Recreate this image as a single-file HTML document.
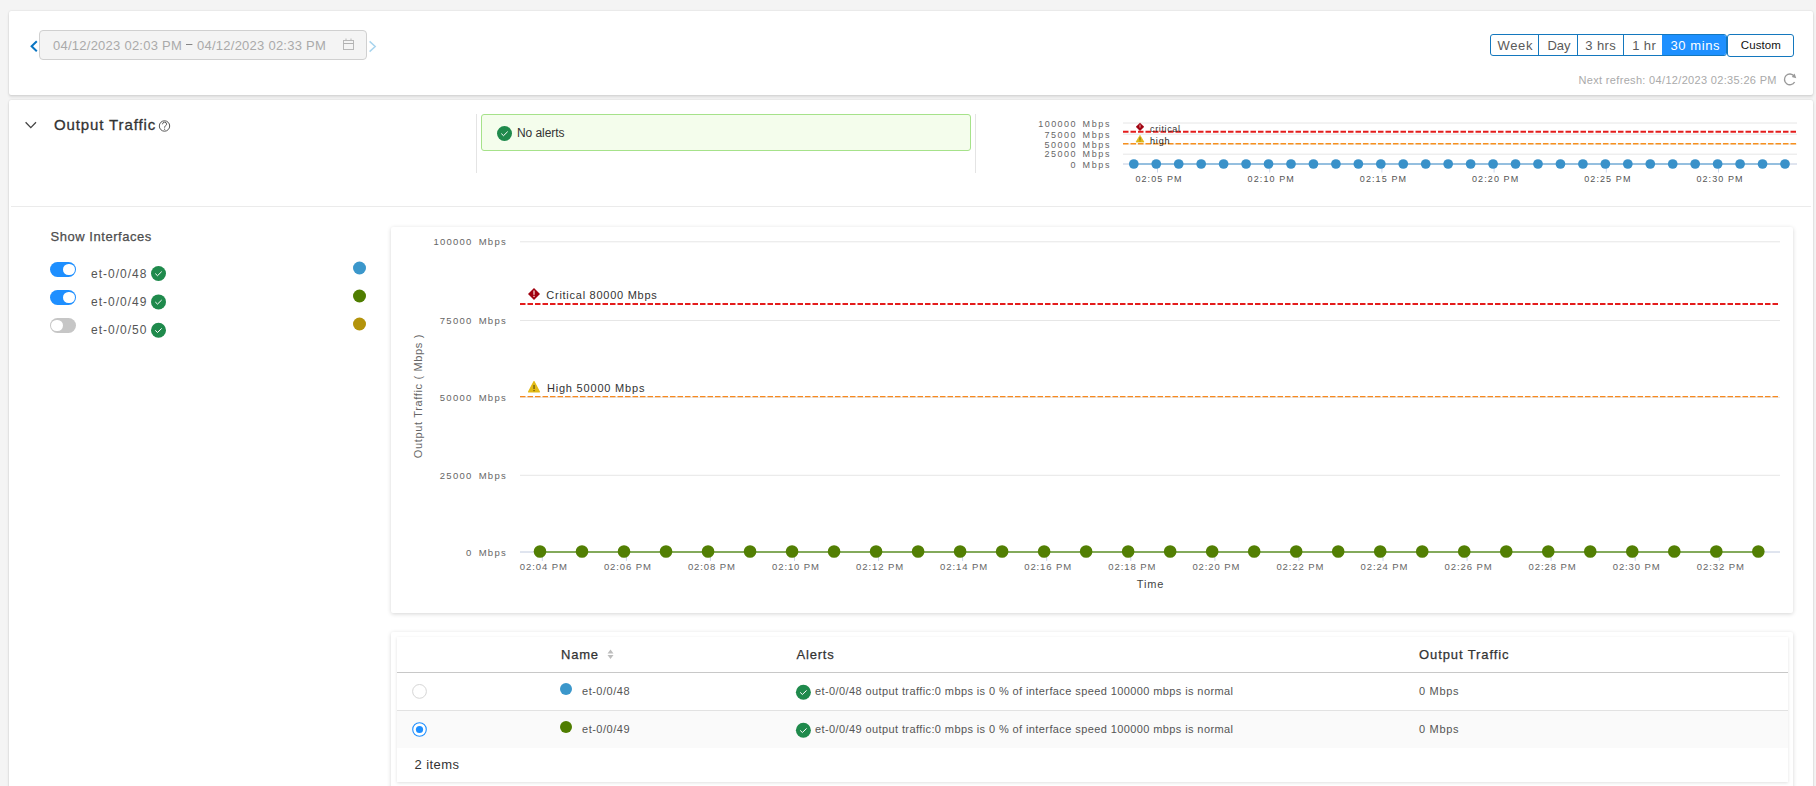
<!DOCTYPE html>
<html><head><meta charset="utf-8"><style>
html,body{margin:0;padding:0;width:1816px;height:786px;overflow:hidden;background:#f4f4f4;font-family:"Liberation Sans", sans-serif}
.card{position:absolute;background:#fff;border-radius:2px;box-shadow:0 0 2px rgba(0,0,0,0.14), 0 2px 3px rgba(0,0,0,0.1)}
.card2{position:absolute;background:#fff;border-radius:2px;box-shadow:0 1px 4px rgba(0,0,0,0.17)}
svg{position:absolute;left:0;top:0}
text{font-family:"Liberation Sans", sans-serif}
</style></head><body>
<div class="card" style="left:9px;top:11px;width:1804px;height:84px"></div>
<div class="card" style="left:9px;top:100px;width:1804px;height:720px"></div>
<div style="position:absolute;left:39px;top:30px;width:326px;height:28px;background:#f4f4f4;border:1px solid #d0d0d0;border-radius:4px"></div>
<div style="position:absolute;left:1490px;top:34px;width:235px;height:20px;border:1px solid #1478be;border-radius:3px;overflow:hidden"><div style="position:absolute;left:171px;top:-1px;width:65px;height:22px;background:#1e90ff;border-radius:0 3px 3px 0"></div><div style="position:absolute;left:47px;top:0;width:1px;height:20px;background:#1478be"></div><div style="position:absolute;left:86px;top:0;width:1px;height:20px;background:#1478be"></div><div style="position:absolute;left:132px;top:0;width:1px;height:20px;background:#1478be"></div></div>
<div style="position:absolute;left:1727px;top:34px;width:65px;height:21px;border:1px solid #1478be;border-radius:3px"></div>
<div style="position:absolute;left:476px;top:114px;width:1px;height:59px;background:#e4e4e4"></div>
<div style="position:absolute;left:975px;top:114px;width:1px;height:59px;background:#e4e4e4"></div>
<div style="position:absolute;left:481px;top:114px;width:488px;height:35px;background:#f4fdec;border:1px solid #a6e28a;border-radius:3px"></div>
<div style="position:absolute;left:11px;top:206px;width:1800px;height:1px;background:#ebebeb"></div>
<div style="position:absolute;left:50px;top:262.0px;width:26px;height:15px;border-radius:8px;background:#1e8fff"></div>
<div style="position:absolute;left:63.2px;top:263.7px;width:11.6px;height:11.6px;border-radius:6px;background:#fff"></div>
<div style="position:absolute;left:50px;top:290.1px;width:26px;height:15px;border-radius:8px;background:#1e8fff"></div>
<div style="position:absolute;left:63.2px;top:291.8px;width:11.6px;height:11.6px;border-radius:6px;background:#fff"></div>
<div style="position:absolute;left:50px;top:318.2px;width:26px;height:15px;border-radius:8px;background:#c6c6c6"></div>
<div style="position:absolute;left:51.2px;top:319.9px;width:11.6px;height:11.6px;border-radius:6px;background:#fff"></div>
<div class="card2" style="left:391px;top:227px;width:1402px;height:386px"></div>
<div class="card2" style="left:391px;top:632px;width:1402px;height:170px"></div>
<div style="position:absolute;left:397px;top:637px;width:1391px;height:145px;background:#fff;box-shadow:0 1px 3px rgba(0,0,0,0.12)"></div>
<div style="position:absolute;left:397px;top:672px;width:1391px;height:1px;background:#c8c8c8"></div>
<div style="position:absolute;left:397px;top:710px;width:1391px;height:1px;background:#e2e2e2"></div>
<div style="position:absolute;left:397px;top:711px;width:1391px;height:37px;background:#fafafa"></div>
<svg width="1816" height="786" viewBox="0 0 1816 786">
<path d="M36.8 41.2 L31.6 46.2 L36.8 51.2" fill="none" stroke="#0a75c2" stroke-width="2"/>
<path d="M369.6 41.4 L375.2 46.5 L369.6 51.6" fill="none" stroke="#a9d5ee" stroke-width="1.5"/>
<text x="53" y="50" font-size="13" fill="#aaaaaa" text-anchor="start" textLength="128.8" lengthAdjust="spacing"  >04/12/2023 02:03 PM</text>
<rect x="186" y="44" width="6.4" height="1" fill="#858585"/>
<text x="197" y="50" font-size="13" fill="#aaaaaa" text-anchor="start" textLength="128.8" lengthAdjust="spacing"  >04/12/2023 02:33 PM</text>
<rect x="343.5" y="40.5" width="10" height="9" fill="none" stroke="#b8b8b8" stroke-width="1"/>
<line x1="343.5" y1="43.5" x2="353.5" y2="43.5" stroke="#b0b0b0" stroke-width="1"/>
<line x1="346" y1="38.5" x2="346" y2="41" stroke="#b8b8b8" stroke-width="1"/>
<line x1="351" y1="38.5" x2="351" y2="41" stroke="#b8b8b8" stroke-width="1"/>
<text x="1515" y="50" font-size="13" fill="#5a5a5a" text-anchor="middle" textLength="35" lengthAdjust="spacing"  >Week</text>
<text x="1559" y="50" font-size="13" fill="#5a5a5a" text-anchor="middle" textLength="23" lengthAdjust="spacing"  >Day</text>
<text x="1600.6" y="50" font-size="13" fill="#5a5a5a" text-anchor="middle" textLength="30.5" lengthAdjust="spacing"  >3 hrs</text>
<text x="1644" y="50" font-size="13" fill="#5a5a5a" text-anchor="middle" textLength="23.5" lengthAdjust="spacing"  >1 hr</text>
<text x="1695" y="50" font-size="13" fill="#ffffff" text-anchor="middle" textLength="49" lengthAdjust="spacing"  >30 mins</text>
<text x="1760.8" y="49" font-size="11.5" fill="#111" text-anchor="middle" textLength="40" lengthAdjust="spacing"  >Custom</text>
<text x="1578.5" y="84" font-size="11" fill="#aaaaaa" text-anchor="start" textLength="198" lengthAdjust="spacing"  >Next refresh: 04/12/2023 02:35:26 PM</text>
<path d="M1794.6 82 A5.4 5.4 0 1 1 1794.1 76" fill="none" stroke="#9a9a9a" stroke-width="1.4"/>
<path d="M1794.6 73.6 L1796.3 78.2 L1791.8 77 Z" fill="#9a9a9a"/>
<path d="M25.6 122.2 L30.8 127.6 L36 122.2" fill="none" stroke="#444" stroke-width="1.3"/>
<text x="54" y="130" font-size="15" fill="#333" text-anchor="start" textLength="101.2" lengthAdjust="spacing" stroke="#333" stroke-width="0.3" >Output Traffic</text>
<circle cx="164.5" cy="126" r="5.2" fill="none" stroke="#555" stroke-width="1"/>
<path d="M162.4 124.3 Q162.6 122.2 164.6 122.2 Q166.7 122.3 166.6 124.2 Q166.5 125.4 165.2 126 Q164.6 126.4 164.6 127.7" fill="none" stroke="#555" stroke-width="0.95"/>
<circle cx="164.6" cy="129.2" r="0.6" fill="#555"/>
<circle cx="504.5" cy="133.5" r="7.5" fill="#1f8a4c"/>
<path d="M501.30 133.60 L503.50 135.70 L507.70 131.60" fill="none" stroke="#fff" stroke-width="1.0"/>
<text x="517" y="137" font-size="12" fill="#333" text-anchor="start" textLength="47.5" lengthAdjust="spacing"  >No alerts</text>
<line x1="1123" y1="164" x2="1797" y2="164" stroke="#e6e6e6" stroke-width="1"/>
<line x1="1123" y1="154.2" x2="1797" y2="154.2" stroke="#e6e6e6" stroke-width="1"/>
<line x1="1123" y1="144" x2="1797" y2="144" stroke="#e6e6e6" stroke-width="1"/>
<line x1="1123" y1="134.2" x2="1797" y2="134.2" stroke="#e6e6e6" stroke-width="1"/>
<line x1="1123" y1="123" x2="1797" y2="123" stroke="#e6e6e6" stroke-width="1"/>
<text x="1075.5" y="167.5" font-size="9" fill="#666" text-anchor="end"   >0</text>
<text x="1082.6" y="167.5" font-size="9" fill="#666" text-anchor="start" textLength="26.8" lengthAdjust="spacing"  >Mbps</text>
<text x="1075.5" y="156.6" font-size="9" fill="#666" text-anchor="end" textLength="31.0" lengthAdjust="spacing"  >25000</text>
<text x="1082.6" y="156.6" font-size="9" fill="#666" text-anchor="start" textLength="26.8" lengthAdjust="spacing"  >Mbps</text>
<text x="1075.5" y="147.7" font-size="9" fill="#666" text-anchor="end" textLength="31.0" lengthAdjust="spacing"  >50000</text>
<text x="1082.6" y="147.7" font-size="9" fill="#666" text-anchor="start" textLength="26.8" lengthAdjust="spacing"  >Mbps</text>
<text x="1075.5" y="137.8" font-size="9" fill="#666" text-anchor="end" textLength="31.0" lengthAdjust="spacing"  >75000</text>
<text x="1082.6" y="137.8" font-size="9" fill="#666" text-anchor="start" textLength="26.8" lengthAdjust="spacing"  >Mbps</text>
<text x="1075.5" y="127" font-size="9" fill="#666" text-anchor="end" textLength="37.2" lengthAdjust="spacing"  >100000</text>
<text x="1082.6" y="127" font-size="9" fill="#666" text-anchor="start" textLength="26.8" lengthAdjust="spacing"  >Mbps</text>
<line x1="1123" y1="131.8" x2="1797" y2="131.8" stroke="#e41c1c" stroke-width="2" stroke-dasharray="5.5 2"/>
<line x1="1123" y1="143.7" x2="1797" y2="143.7" stroke="#f7901e" stroke-width="1.5" stroke-dasharray="5.5 2"/>
<line x1="1123" y1="164" x2="1797" y2="164" stroke="#ccd6eb" stroke-width="1"/>
<line x1="1157.5" y1="164" x2="1157.5" y2="172.5" stroke="#ccd6eb" stroke-width="1"/>
<text x="1158.5" y="182" font-size="9" fill="#555" text-anchor="middle" textLength="46.2" lengthAdjust="spacing"  >02:05 PM</text>
<line x1="1269.7" y1="164" x2="1269.7" y2="172.5" stroke="#ccd6eb" stroke-width="1"/>
<text x="1270.7" y="182" font-size="9" fill="#555" text-anchor="middle" textLength="46.2" lengthAdjust="spacing"  >02:10 PM</text>
<line x1="1381.9" y1="164" x2="1381.9" y2="172.5" stroke="#ccd6eb" stroke-width="1"/>
<text x="1382.9" y="182" font-size="9" fill="#555" text-anchor="middle" textLength="46.2" lengthAdjust="spacing"  >02:15 PM</text>
<line x1="1494.1" y1="164" x2="1494.1" y2="172.5" stroke="#ccd6eb" stroke-width="1"/>
<text x="1495.1" y="182" font-size="9" fill="#555" text-anchor="middle" textLength="46.2" lengthAdjust="spacing"  >02:20 PM</text>
<line x1="1606.3" y1="164" x2="1606.3" y2="172.5" stroke="#ccd6eb" stroke-width="1"/>
<text x="1607.3" y="182" font-size="9" fill="#555" text-anchor="middle" textLength="46.2" lengthAdjust="spacing"  >02:25 PM</text>
<line x1="1718.5" y1="164" x2="1718.5" y2="172.5" stroke="#ccd6eb" stroke-width="1"/>
<text x="1719.5" y="182" font-size="9" fill="#555" text-anchor="middle" textLength="46.2" lengthAdjust="spacing"  >02:30 PM</text>
<line x1="1134" y1="164" x2="1785" y2="164" stroke="#4a9ad0" stroke-width="1.2"/>
<circle cx="1133.80" cy="164" r="4.85" fill="#3991c9"/>
<circle cx="1156.26" cy="164" r="4.85" fill="#3991c9"/>
<circle cx="1178.71" cy="164" r="4.85" fill="#3991c9"/>
<circle cx="1201.17" cy="164" r="4.85" fill="#3991c9"/>
<circle cx="1223.62" cy="164" r="4.85" fill="#3991c9"/>
<circle cx="1246.08" cy="164" r="4.85" fill="#3991c9"/>
<circle cx="1268.53" cy="164" r="4.85" fill="#3991c9"/>
<circle cx="1290.99" cy="164" r="4.85" fill="#3991c9"/>
<circle cx="1313.44" cy="164" r="4.85" fill="#3991c9"/>
<circle cx="1335.90" cy="164" r="4.85" fill="#3991c9"/>
<circle cx="1358.35" cy="164" r="4.85" fill="#3991c9"/>
<circle cx="1380.81" cy="164" r="4.85" fill="#3991c9"/>
<circle cx="1403.26" cy="164" r="4.85" fill="#3991c9"/>
<circle cx="1425.72" cy="164" r="4.85" fill="#3991c9"/>
<circle cx="1448.17" cy="164" r="4.85" fill="#3991c9"/>
<circle cx="1470.63" cy="164" r="4.85" fill="#3991c9"/>
<circle cx="1493.08" cy="164" r="4.85" fill="#3991c9"/>
<circle cx="1515.54" cy="164" r="4.85" fill="#3991c9"/>
<circle cx="1537.99" cy="164" r="4.85" fill="#3991c9"/>
<circle cx="1560.45" cy="164" r="4.85" fill="#3991c9"/>
<circle cx="1582.90" cy="164" r="4.85" fill="#3991c9"/>
<circle cx="1605.36" cy="164" r="4.85" fill="#3991c9"/>
<circle cx="1627.81" cy="164" r="4.85" fill="#3991c9"/>
<circle cx="1650.27" cy="164" r="4.85" fill="#3991c9"/>
<circle cx="1672.72" cy="164" r="4.85" fill="#3991c9"/>
<circle cx="1695.18" cy="164" r="4.85" fill="#3991c9"/>
<circle cx="1717.63" cy="164" r="4.85" fill="#3991c9"/>
<circle cx="1740.09" cy="164" r="4.85" fill="#3991c9"/>
<circle cx="1762.54" cy="164" r="4.85" fill="#3991c9"/>
<circle cx="1785.00" cy="164" r="4.85" fill="#3991c9"/>
<path d="M1140 122.9 L1144 126.8 L1140 130.7 L1136 126.8 Z" fill="#a0000f" stroke="#a0000f" stroke-width="0.4" stroke-linejoin="round"/><rect x="1139.5" y="124.6" width="1" height="3" fill="#e8b0b0"/>
<text x="1150" y="131.5" font-size="9" fill="#333" text-anchor="start" textLength="30" lengthAdjust="spacing"  >critical</text>
<path d="M1140 135.4 L1143.9 142 L1136.1 142 Z" fill="#e0b816" stroke="#e0b816" stroke-width="0.8" stroke-linejoin="round"/><rect x="1139.5" y="137.3" width="1" height="2.6" fill="#7a6a10"/><rect x="1139.5" y="140.6" width="1" height="0.8" fill="#7a6a10"/>
<text x="1150" y="143.8" font-size="9" fill="#222" text-anchor="start" textLength="19.5" lengthAdjust="spacing"  >high</text>
<text x="50.5" y="240.7" font-size="13" fill="#4d4d4d" text-anchor="start" textLength="100.8" lengthAdjust="spacing" stroke="#4d4d4d" stroke-width="0.25" >Show Interfaces</text>
<text x="91" y="277.7" font-size="12" fill="#555" text-anchor="start" textLength="55.5" lengthAdjust="spacing"  >et-0/0/48</text>
<circle cx="158.5" cy="273.5" r="7.5" fill="#1f8a4c"/>
<path d="M155.30 273.60 L157.50 275.70 L161.70 271.60" fill="none" stroke="#fff" stroke-width="1.0"/>
<circle cx="359.5" cy="268" r="6.5" fill="#3b97cb"/>
<text x="91" y="305.9" font-size="12" fill="#555" text-anchor="start" textLength="55.5" lengthAdjust="spacing"  >et-0/0/49</text>
<circle cx="158.5" cy="301.9" r="7.5" fill="#1f8a4c"/>
<path d="M155.30 302.00 L157.50 304.10 L161.70 300.00" fill="none" stroke="#fff" stroke-width="1.0"/>
<circle cx="359.5" cy="296" r="6.5" fill="#4f7d00"/>
<text x="91" y="334.1" font-size="12" fill="#555" text-anchor="start" textLength="55.5" lengthAdjust="spacing"  >et-0/0/50</text>
<circle cx="158.5" cy="330.3" r="7.5" fill="#1f8a4c"/>
<path d="M155.30 330.40 L157.50 332.50 L161.70 328.40" fill="none" stroke="#fff" stroke-width="1.0"/>
<circle cx="359.5" cy="324" r="6.5" fill="#b3930b"/>
<line x1="520" y1="552.0" x2="1780" y2="552.0" stroke="#e6e6e6" stroke-width="1"/>
<text x="471.3" y="555.6" font-size="9.5" fill="#666" text-anchor="end"   >0</text>
<text x="478.7" y="555.6" font-size="9.5" fill="#666" text-anchor="start" textLength="27" lengthAdjust="spacing"  >Mbps</text>
<line x1="520" y1="475.3" x2="1780" y2="475.3" stroke="#e6e6e6" stroke-width="1"/>
<text x="471.3" y="478.9" font-size="9.5" fill="#666" text-anchor="end" textLength="31.5" lengthAdjust="spacing"  >25000</text>
<text x="478.7" y="478.9" font-size="9.5" fill="#666" text-anchor="start" textLength="27" lengthAdjust="spacing"  >Mbps</text>
<line x1="520" y1="397.3" x2="1780" y2="397.3" stroke="#e6e6e6" stroke-width="1"/>
<text x="471.3" y="400.9" font-size="9.5" fill="#666" text-anchor="end" textLength="31.5" lengthAdjust="spacing"  >50000</text>
<text x="478.7" y="400.9" font-size="9.5" fill="#666" text-anchor="start" textLength="27" lengthAdjust="spacing"  >Mbps</text>
<line x1="520" y1="320.5" x2="1780" y2="320.5" stroke="#e6e6e6" stroke-width="1"/>
<text x="471.3" y="324.1" font-size="9.5" fill="#666" text-anchor="end" textLength="31.5" lengthAdjust="spacing"  >75000</text>
<text x="478.7" y="324.1" font-size="9.5" fill="#666" text-anchor="start" textLength="27" lengthAdjust="spacing"  >Mbps</text>
<line x1="520" y1="241.8" x2="1780" y2="241.8" stroke="#e6e6e6" stroke-width="1"/>
<text x="471.3" y="245.4" font-size="9.5" fill="#666" text-anchor="end" textLength="37.8" lengthAdjust="spacing"  >100000</text>
<text x="478.7" y="245.4" font-size="9.5" fill="#666" text-anchor="start" textLength="27" lengthAdjust="spacing"  >Mbps</text>
<line x1="520" y1="304" x2="1780" y2="304" stroke="#e41c1c" stroke-width="2" stroke-dasharray="5.5 2"/>
<line x1="520" y1="396.6" x2="1780" y2="396.6" stroke="#f7891f" stroke-width="1.3" stroke-dasharray="5.5 2"/>
<line x1="520" y1="552" x2="1780" y2="552" stroke="#ccd6eb" stroke-width="1"/>
<line x1="542.3" y1="552" x2="542.3" y2="561" stroke="#ccd6eb" stroke-width="1"/>
<text x="543.3" y="569.6" font-size="9.5" fill="#666" text-anchor="middle" textLength="47" lengthAdjust="spacing"  >02:04 PM</text>
<line x1="626.4" y1="552" x2="626.4" y2="561" stroke="#ccd6eb" stroke-width="1"/>
<text x="627.4" y="569.6" font-size="9.5" fill="#666" text-anchor="middle" textLength="47" lengthAdjust="spacing"  >02:06 PM</text>
<line x1="710.4" y1="552" x2="710.4" y2="561" stroke="#ccd6eb" stroke-width="1"/>
<text x="711.4" y="569.6" font-size="9.5" fill="#666" text-anchor="middle" textLength="47" lengthAdjust="spacing"  >02:08 PM</text>
<line x1="794.5" y1="552" x2="794.5" y2="561" stroke="#ccd6eb" stroke-width="1"/>
<text x="795.5" y="569.6" font-size="9.5" fill="#666" text-anchor="middle" textLength="47" lengthAdjust="spacing"  >02:10 PM</text>
<line x1="878.6" y1="552" x2="878.6" y2="561" stroke="#ccd6eb" stroke-width="1"/>
<text x="879.6" y="569.6" font-size="9.5" fill="#666" text-anchor="middle" textLength="47" lengthAdjust="spacing"  >02:12 PM</text>
<line x1="962.6" y1="552" x2="962.6" y2="561" stroke="#ccd6eb" stroke-width="1"/>
<text x="963.6" y="569.6" font-size="9.5" fill="#666" text-anchor="middle" textLength="47" lengthAdjust="spacing"  >02:14 PM</text>
<line x1="1046.7" y1="552" x2="1046.7" y2="561" stroke="#ccd6eb" stroke-width="1"/>
<text x="1047.7" y="569.6" font-size="9.5" fill="#666" text-anchor="middle" textLength="47" lengthAdjust="spacing"  >02:16 PM</text>
<line x1="1130.8" y1="552" x2="1130.8" y2="561" stroke="#ccd6eb" stroke-width="1"/>
<text x="1131.8" y="569.6" font-size="9.5" fill="#666" text-anchor="middle" textLength="47" lengthAdjust="spacing"  >02:18 PM</text>
<line x1="1214.9" y1="552" x2="1214.9" y2="561" stroke="#ccd6eb" stroke-width="1"/>
<text x="1215.9" y="569.6" font-size="9.5" fill="#666" text-anchor="middle" textLength="47" lengthAdjust="spacing"  >02:20 PM</text>
<line x1="1298.9" y1="552" x2="1298.9" y2="561" stroke="#ccd6eb" stroke-width="1"/>
<text x="1299.9" y="569.6" font-size="9.5" fill="#666" text-anchor="middle" textLength="47" lengthAdjust="spacing"  >02:22 PM</text>
<line x1="1383.0" y1="552" x2="1383.0" y2="561" stroke="#ccd6eb" stroke-width="1"/>
<text x="1384.0" y="569.6" font-size="9.5" fill="#666" text-anchor="middle" textLength="47" lengthAdjust="spacing"  >02:24 PM</text>
<line x1="1467.1" y1="552" x2="1467.1" y2="561" stroke="#ccd6eb" stroke-width="1"/>
<text x="1468.1" y="569.6" font-size="9.5" fill="#666" text-anchor="middle" textLength="47" lengthAdjust="spacing"  >02:26 PM</text>
<line x1="1551.1" y1="552" x2="1551.1" y2="561" stroke="#ccd6eb" stroke-width="1"/>
<text x="1552.1" y="569.6" font-size="9.5" fill="#666" text-anchor="middle" textLength="47" lengthAdjust="spacing"  >02:28 PM</text>
<line x1="1635.2" y1="552" x2="1635.2" y2="561" stroke="#ccd6eb" stroke-width="1"/>
<text x="1636.2" y="569.6" font-size="9.5" fill="#666" text-anchor="middle" textLength="47" lengthAdjust="spacing"  >02:30 PM</text>
<line x1="1719.3" y1="552" x2="1719.3" y2="561" stroke="#ccd6eb" stroke-width="1"/>
<text x="1720.3" y="569.6" font-size="9.5" fill="#666" text-anchor="middle" textLength="47" lengthAdjust="spacing"  >02:32 PM</text>
<line x1="540" y1="552" x2="1758.3" y2="552" stroke="#64962a" stroke-width="1.6"/>
<circle cx="540.00" cy="551.5" r="6.3" fill="#527f03"/>
<circle cx="582.01" cy="551.5" r="6.3" fill="#527f03"/>
<circle cx="624.02" cy="551.5" r="6.3" fill="#527f03"/>
<circle cx="666.03" cy="551.5" r="6.3" fill="#527f03"/>
<circle cx="708.04" cy="551.5" r="6.3" fill="#527f03"/>
<circle cx="750.05" cy="551.5" r="6.3" fill="#527f03"/>
<circle cx="792.06" cy="551.5" r="6.3" fill="#527f03"/>
<circle cx="834.07" cy="551.5" r="6.3" fill="#527f03"/>
<circle cx="876.08" cy="551.5" r="6.3" fill="#527f03"/>
<circle cx="918.09" cy="551.5" r="6.3" fill="#527f03"/>
<circle cx="960.10" cy="551.5" r="6.3" fill="#527f03"/>
<circle cx="1002.11" cy="551.5" r="6.3" fill="#527f03"/>
<circle cx="1044.12" cy="551.5" r="6.3" fill="#527f03"/>
<circle cx="1086.13" cy="551.5" r="6.3" fill="#527f03"/>
<circle cx="1128.14" cy="551.5" r="6.3" fill="#527f03"/>
<circle cx="1170.16" cy="551.5" r="6.3" fill="#527f03"/>
<circle cx="1212.17" cy="551.5" r="6.3" fill="#527f03"/>
<circle cx="1254.18" cy="551.5" r="6.3" fill="#527f03"/>
<circle cx="1296.19" cy="551.5" r="6.3" fill="#527f03"/>
<circle cx="1338.20" cy="551.5" r="6.3" fill="#527f03"/>
<circle cx="1380.21" cy="551.5" r="6.3" fill="#527f03"/>
<circle cx="1422.22" cy="551.5" r="6.3" fill="#527f03"/>
<circle cx="1464.23" cy="551.5" r="6.3" fill="#527f03"/>
<circle cx="1506.24" cy="551.5" r="6.3" fill="#527f03"/>
<circle cx="1548.25" cy="551.5" r="6.3" fill="#527f03"/>
<circle cx="1590.26" cy="551.5" r="6.3" fill="#527f03"/>
<circle cx="1632.27" cy="551.5" r="6.3" fill="#527f03"/>
<circle cx="1674.28" cy="551.5" r="6.3" fill="#527f03"/>
<circle cx="1716.29" cy="551.5" r="6.3" fill="#527f03"/>
<circle cx="1758.30" cy="551.5" r="6.3" fill="#527f03"/>
<text x="1150" y="587.6" font-size="11" fill="#444" text-anchor="middle" textLength="26.5" lengthAdjust="spacing"  >Time</text>
<text x="0" y="0" font-size="11" fill="#666" text-anchor="middle" textLength="123.5" lengthAdjust="spacing"  transform="translate(422.1 396.4) rotate(-90)">Output Traffic ( Mbps )</text>
<path d="M534 288 L540 294 L534 300 L528 294 Z" fill="#a0000f"/>
<rect x="533.3" y="290.5" width="1.4" height="4.3" fill="#f0c0c0"/><rect x="533.3" y="295.8" width="1.4" height="1.3" fill="#f0c0c0"/>
<text x="546.3" y="299" font-size="11" fill="#333" text-anchor="start" textLength="110.5" lengthAdjust="spacing"  >Critical 80000 Mbps</text>
<path d="M534 381.6 L539.4 391.9 L528.6 391.9 Z" fill="#e3bb17" stroke="#e3bb17" stroke-width="1.2" stroke-linejoin="round"/>
<rect x="533.4" y="385" width="1.3" height="4" fill="#6a5a10"/><rect x="533.4" y="390" width="1.3" height="1.2" fill="#6a5a10"/>
<text x="546.9" y="392" font-size="11" fill="#333" text-anchor="start" textLength="97.5" lengthAdjust="spacing"  >High 50000 Mbps</text>
<text x="561" y="659" font-size="13" fill="#333" text-anchor="start" textLength="37" lengthAdjust="spacing" stroke="#333" stroke-width="0.25" >Name</text>
<path d="M607.5 653.5 L610.5 649.5 L613.5 653.5 Z M607.5 655 L610.5 659 L613.5 655 Z" fill="#bdbdbd"/>
<text x="796.5" y="659" font-size="13" fill="#333" text-anchor="start" textLength="37.2" lengthAdjust="spacing" stroke="#333" stroke-width="0.25" >Alerts</text>
<text x="1419" y="659" font-size="13" fill="#333" text-anchor="start" textLength="89.5" lengthAdjust="spacing" stroke="#333" stroke-width="0.25" >Output Traffic</text>
<circle cx="419.5" cy="691.4" r="6.9" fill="#fff" stroke="#d6d6d6" stroke-width="1"/>
<circle cx="566" cy="689" r="6" fill="#3b97cb"/>
<text x="582" y="695" font-size="11" fill="#555" text-anchor="start" textLength="47.5" lengthAdjust="spacing"  >et-0/0/48</text>
<circle cx="803.4" cy="692.3" r="7.5" fill="#1f8a4c"/>
<path d="M800.20 692.40 L802.40 694.50 L806.60 690.40" fill="none" stroke="#fff" stroke-width="1.0"/>
<text x="815" y="695" font-size="11" fill="#555" text-anchor="start" textLength="418" lengthAdjust="spacing"  >et-0/0/48 output traffic:0 mbps is 0 % of interface speed 100000 mbps is normal</text>
<text x="1419" y="695" font-size="11" fill="#555" text-anchor="start" textLength="39.5" lengthAdjust="spacing"  >0 Mbps</text>
<circle cx="419.5" cy="729.5" r="6.8" fill="#fff" stroke="#1e8fff" stroke-width="1.1"/>
<circle cx="419.5" cy="729.5" r="3.6" fill="#1e8fff"/>
<circle cx="566" cy="727" r="6" fill="#4f7d00"/>
<text x="582" y="733" font-size="11" fill="#555" text-anchor="start" textLength="47.5" lengthAdjust="spacing"  >et-0/0/49</text>
<circle cx="803.4" cy="730.3" r="7.5" fill="#1f8a4c"/>
<path d="M800.20 730.40 L802.40 732.50 L806.60 728.40" fill="none" stroke="#fff" stroke-width="1.0"/>
<text x="815" y="733" font-size="11" fill="#555" text-anchor="start" textLength="418" lengthAdjust="spacing"  >et-0/0/49 output traffic:0 mbps is 0 % of interface speed 100000 mbps is normal</text>
<text x="1419" y="733" font-size="11" fill="#555" text-anchor="start" textLength="39.5" lengthAdjust="spacing"  >0 Mbps</text>
<text x="414.5" y="768.8" font-size="13" fill="#333" text-anchor="start" textLength="44.5" lengthAdjust="spacing"  >2 items</text>
</svg>
</body></html>
